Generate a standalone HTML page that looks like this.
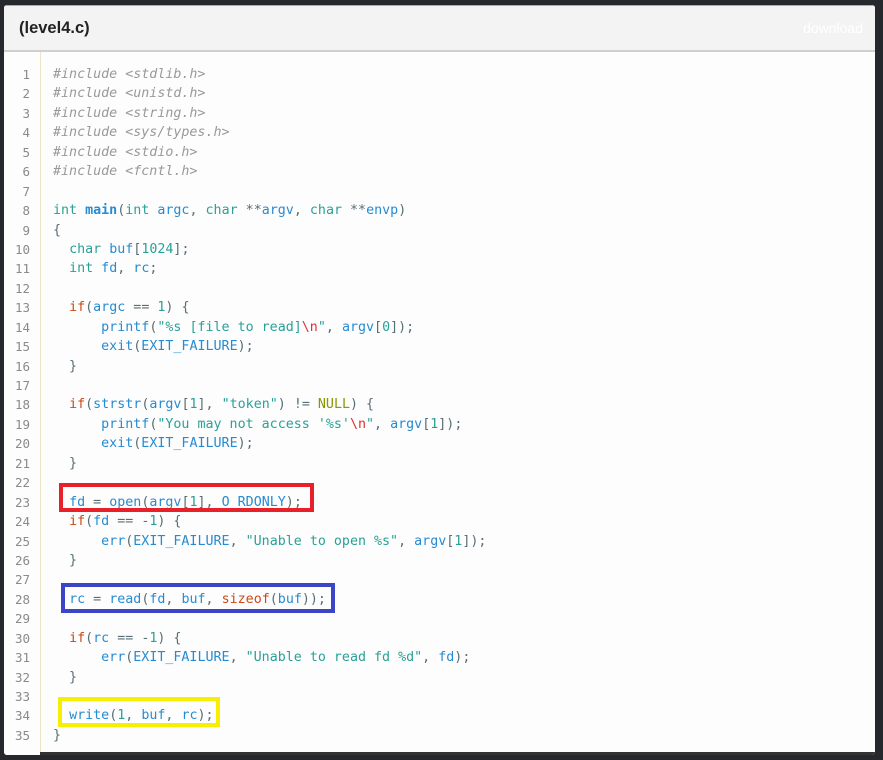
<!DOCTYPE html>
<html><head><meta charset="utf-8"><style>
html,body{margin:0;padding:0;background:#25282c;width:883px;height:760px;overflow:hidden}
.card{position:absolute;left:4px;top:5px;width:871px;height:750px;background:#fdfdfd;border-radius:3px;overflow:hidden}
.hd{position:absolute;left:0;top:0;width:871px;background:#f3f3f3;border-top:1px solid #aaa;border-bottom:2px solid #cfcfcf;box-sizing:border-box;height:47px}
.hd b{position:absolute;left:15px;top:13px;font:bold 16.5px "Liberation Sans",sans-serif;color:#222}
.hd span{position:absolute;right:12px;top:14px;font:14px "Liberation Sans",sans-serif;color:#fff}
.gut{position:absolute;left:0;top:47px;width:36px;height:703px;background:#fdfdfd;border-right:1px solid #ece3c8}
pre{margin:0;position:absolute;top:65px;font:13.33px/19.44px "DejaVu Sans Mono","Liberation Mono",monospace;color:#586e75}
.ln{left:0;width:30px;text-align:right;color:#8a8a8a;font-size:12.5px}
.code{left:53px}
.c{color:#999;font-style:italic}.k{color:#2aa198}.f{color:#268bd2}.b{color:#268bd2;font-weight:bold}.r{color:#cb4b16}.s{color:#2aa198}.e{color:#dc322f}.n{color:#2aa198}.o{color:#859900}
.bx{position:absolute;border:4px solid;box-sizing:border-box}
.bottom{position:absolute;left:36px;top:747px;width:835px;height:3px;background:#333}
</style></head><body>
<div class="card">
<div class="hd"><b>(level4.c)</b><span>download</span></div>
<div class="gut"></div>
<div class="bottom"></div>
</div>
<pre class="ln">1
2
3
4
5
6
7
8
9
10
11
12
13
14
15
16
17
18
19
20
21
22
23
24
25
26
27
28
29
30
31
32
33
34
35</pre>
<pre class="code"><span class="c">#include &lt;stdlib.h&gt;</span>
<span class="c">#include &lt;unistd.h&gt;</span>
<span class="c">#include &lt;string.h&gt;</span>
<span class="c">#include &lt;sys/types.h&gt;</span>
<span class="c">#include &lt;stdio.h&gt;</span>
<span class="c">#include &lt;fcntl.h&gt;</span>

<span class="k">int</span> <span class="b">main</span>(<span class="k">int</span> <span class="f">argc</span>, <span class="k">char</span> **<span class="f">argv</span>, <span class="k">char</span> **<span class="f">envp</span>)
{
  <span class="k">char</span> <span class="f">buf</span>[<span class="n">1024</span>];
  <span class="k">int</span> <span class="f">fd</span>, <span class="f">rc</span>;

  <span class="r">if</span>(<span class="f">argc</span> == <span class="n">1</span>) {
      <span class="f">printf</span>(<span class="s">"%s [file to read]</span><span class="e">\n</span><span class="s">"</span>, <span class="f">argv</span>[<span class="n">0</span>]);
      <span class="f">exit</span>(<span class="f">EXIT_FAILURE</span>);
  }

  <span class="r">if</span>(<span class="f">strstr</span>(<span class="f">argv</span>[<span class="n">1</span>], <span class="s">"token"</span>) != <span class="o">NULL</span>) {
      <span class="f">printf</span>(<span class="s">"You may not access '%s'</span><span class="e">\n</span><span class="s">"</span>, <span class="f">argv</span>[<span class="n">1</span>]);
      <span class="f">exit</span>(<span class="f">EXIT_FAILURE</span>);
  }

  <span class="f">fd</span> = <span class="f">open</span>(<span class="f">argv</span>[<span class="n">1</span>], <span class="f">O_RDONLY</span>);
  <span class="r">if</span>(<span class="f">fd</span> == -<span class="n">1</span>) {
      <span class="f">err</span>(<span class="f">EXIT_FAILURE</span>, <span class="s">"Unable to open %s"</span>, <span class="f">argv</span>[<span class="n">1</span>]);
  }

  <span class="f">rc</span> = <span class="f">read</span>(<span class="f">fd</span>, <span class="f">buf</span>, <span class="r">sizeof</span>(<span class="f">buf</span>));

  <span class="r">if</span>(<span class="f">rc</span> == -<span class="n">1</span>) {
      <span class="f">err</span>(<span class="f">EXIT_FAILURE</span>, <span class="s">"Unable to read fd %d"</span>, <span class="f">fd</span>);
  }

  <span class="f">write</span>(<span class="n">1</span>, <span class="f">buf</span>, <span class="f">rc</span>);
}</pre>
<div class="bx" style="left:59px;top:483px;width:255px;height:29px;border-color:#e8202a"></div>
<div class="bx" style="left:61px;top:583px;width:274px;height:30px;border-color:#3a45c8"></div>
<div class="bx" style="left:58px;top:697px;width:162px;height:30px;border-color:#f8ee00"></div>
</body></html>
